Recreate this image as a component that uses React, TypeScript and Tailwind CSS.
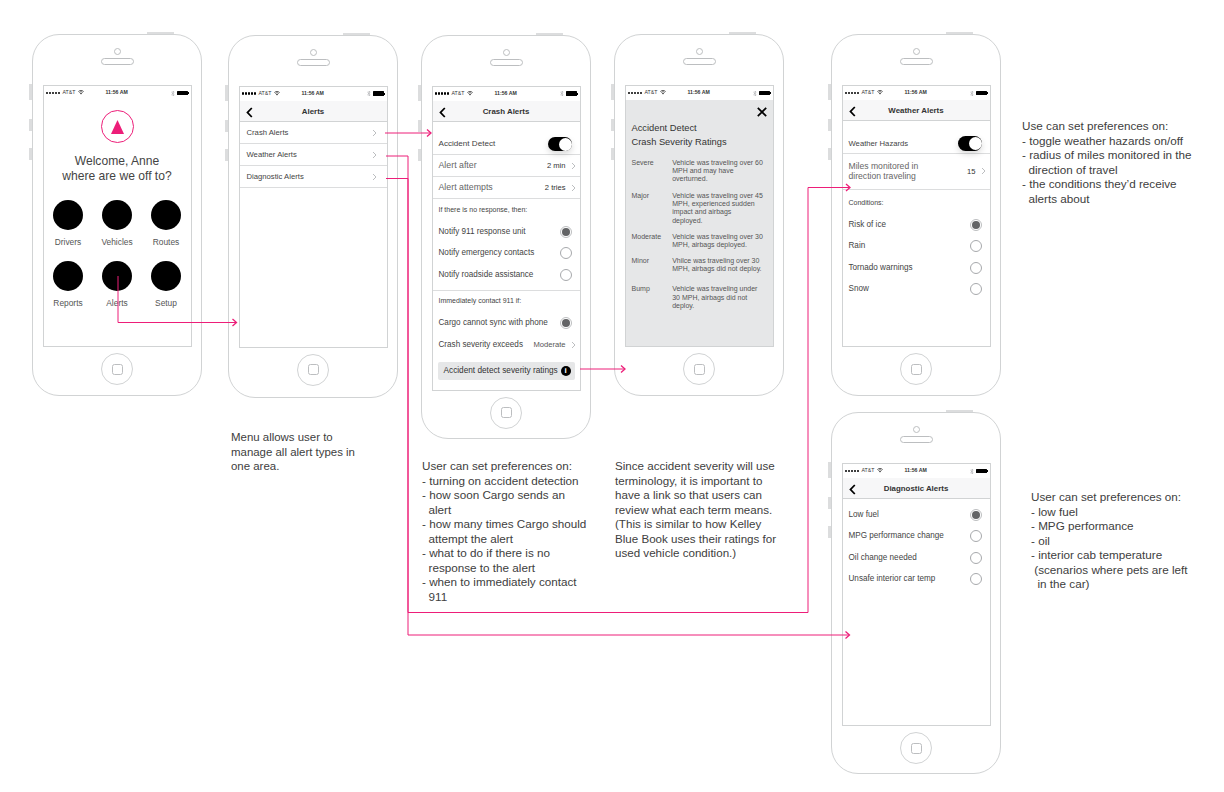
import React from "react";

const Chevron = () => (
  <svg width="5" height="8" viewBox="0 0 5 8" className="shrink-0">
    <path d="M1 1l3 3-3 3" fill="none" stroke="#bcbec0" strokeWidth="1" />
  </svg>
);

const Back = () => (
  <svg width="7" height="11" viewBox="0 0 7 11" className="shrink-0">
    <path d="M5.8 1L1.5 5.5l4.3 4.5" fill="none" stroke="#000" strokeWidth="1.8" />
  </svg>
);

const StatusBar = () => (
  <div className="flex h-[14px] shrink-0 items-center pl-[2px] pr-[2px] text-[5.2px] text-[#333]">
    <div className="flex w-[60px] items-center">
      <div className="flex gap-[0.5px]">
        {[0, 1, 2, 3, 4].map((i) => (
          <span key={i} className="h-[2.6px] w-[2.6px] rounded-full bg-black" />
        ))}
      </div>
      <span className="ml-[2px]">AT&amp;T</span>
      <svg width="6" height="5" viewBox="0 0 6 5" className="ml-[3px]">
        <path d="M0.3 1.6C1.9 0 4.1 0 5.7 1.6M1.2 2.5C2.3 1.5 3.7 1.5 4.8 2.5" fill="none" stroke="#222" strokeWidth="0.7" />
        <path d="M2 3.2C2.6 2.8 3.4 2.8 4 3.2L3 4.6Z" fill="#222" />
      </svg>
    </div>
    <span className="font-bold">11:56 AM</span>
    <svg width="4" height="7" viewBox="0 0 4 7" className="ml-auto">
      <path d="M0.3 2L3.2 4.8 2 6V1L3.2 2.2 0.3 5" fill="none" stroke="#a7a9ac" strokeWidth="0.6" />
    </svg>
    <div className="ml-[2.5px] flex items-center">
      <span className="h-[4.5px] w-[10.5px] rounded-[0.5px] bg-black" />
      <span className="h-[2px] w-[0.8px] bg-black" />
    </div>
  </div>
);

const Nav = ({ title }: { title: string }) => (
  <div className="relative flex h-[21px] shrink-0 items-center justify-center border-b border-[#d1d3d4] bg-[#f7f7f8] pt-[2px] text-[7.9px] font-bold text-[#333]">
    <span className="absolute left-[6px] top-[6px] flex">
      <Back />
    </span>
    <span>{title}</span>
  </div>
);

const Radio = ({ on }: { on?: boolean }) => (
  <span className={`flex h-[12px] w-[12px] shrink-0 items-center justify-center rounded-full border bg-white ${on ? "border-[#bcbec0]" : "border-[#a7a9ac]"}`}>
    {on ? <span className="h-[8px] w-[8px] rounded-full bg-[#636466]" /> : null}
  </span>
);

const Toggle = () => (
  <span className="flex h-[14.5px] w-[24px] shrink-0 items-center justify-end rounded-full bg-black shadow-[0_3px_6px_rgba(0,0,0,0.15)]">
    <span className="h-[13px] w-[13px] rounded-full bg-white" />
  </span>
);

const RadioRow = ({ label, on }: { label: string; on?: boolean }) => (
  <div className="flex h-[21.5px] items-center justify-between pl-[6px] pr-[8px] text-[8.15px] text-[#444]">
    <span>{label}</span>
    <Radio on={on} />
  </div>
);

const Phone = ({ className, screen, children }: { className: string; screen: string; children: React.ReactNode }) => (
  <div className={`absolute flex w-[170px] flex-col items-center rounded-[27px] border border-[#d1d3d4] bg-white ${className}`}>
    <span className="absolute left-[-4px] top-[49px] h-[16px] w-[3px] bg-[#dcddde]" />
    <span className="absolute left-[-4px] top-[84px] h-[12px] w-[3px] bg-[#dcddde]" />
    <span className="absolute left-[-4px] top-[113px] h-[12px] w-[3px] bg-[#dcddde]" />
    <span className="absolute left-[114px] top-[-3px] h-[2px] w-[27px] bg-[#dcddde]" />
    <span className="mt-[13px] h-[7px] w-[7px] rounded-full border border-[#bcbec0]" />
    <span className="mt-[3px] h-[7px] w-[33px] rounded-full border border-[#bcbec0]" />
    <div className={`mt-[20px] flex w-[149px] flex-col overflow-hidden border border-[#d1d3d4] ${screen}`}>
      <StatusBar />
      {children}
    </div>
    <span className="mt-[6px] flex h-[32px] w-[32px] items-center justify-center rounded-full border border-[#d1d3d4]">
      <span className="h-[11px] w-[11px] rounded-[2.5px] border border-[#bcbec0]" />
    </span>
  </div>
);

const Home = ({ label }: { label: string }) => (
  <div className="flex h-[61px] flex-col items-center">
    <span className="h-[30px] w-[30px] rounded-full bg-black" />
    <span className="mt-[6.5px] text-[8.4px] leading-[10px] text-[#555]">{label}</span>
  </div>
);

const MenuRow = ({ label }: { label: string }) => (
  <div className="flex h-[22px] items-center justify-between border-b border-[#dcddde] pl-[7px] pr-[10px] pt-[2px] text-[7.7px] text-[#444]">
    <span>{label}</span>
    <Chevron />
  </div>
);

const ValueRow = ({ label, value, className }: { label: string; value: string; className: string }) => (
  <div className={`flex items-center border-b border-[#dcddde] pl-[6px] pr-[4px] pt-[1px] text-[#666] ${className}`}>
    <span className="text-[8.8px]">{label}</span>
    <span className="ml-auto mr-[5px] text-[7.6px] text-[#333]">{value}</span>
    <Chevron />
  </div>
);

const Rating = ({ label, lines, className }: { label: string; lines: string[]; className: string }) => (
  <div className={`flex text-[7px] leading-[8.35px] text-[#555] ${className}`}>
    <span className="w-[40.7px] shrink-0">{label}</span>
    <div className="flex flex-col">
      {lines.map((l) => (
        <span key={l} className="whitespace-nowrap">{l}</span>
      ))}
    </div>
  </div>
);

const Note = ({ className, lines }: { className: string; lines: string[] }) => (
  <div className={`absolute whitespace-pre leading-[14.5px] text-[#404040] ${className}`}>
    {lines.map((l, i) => (
      <div key={i}>{l}</div>
    ))}
  </div>
);

const Head = ({ x, y }: { x: number; y: number }) => (
  <path d={`M${x - 4} ${y - 3.5}L${x} ${y}l${-4} 3.5`} fill="none" stroke="#ed1e79" strokeWidth="1.3" />
);

export default function App() {
  return (
    <div className="relative h-[792px] w-[1224px] overflow-hidden bg-white opacity-[0.999] [font-family:'Liberation_Sans',Arial,sans-serif]">
      <Phone className="left-[32px] top-[34px] h-[362px]" screen="h-[262px]">
        <div className="flex flex-col items-center">
          <div className="mt-[10px] flex h-[33px] w-[33px] items-center justify-center rounded-full border-[1.5px] border-[#ed1e79]">
            <svg width="13" height="14" viewBox="0 0 13 14">
              <path d="M6.5 0L13 14H0Z" fill="#ed1e79" />
            </svg>
          </div>
          <div className="mt-[11px] text-center text-[12.1px] leading-[15px] text-[#444]">
            <div>Welcome, Anne</div>
            <div>where are we off to?</div>
          </div>
          <div className="mt-[16px] grid w-[147px] grid-cols-3">
            {["Drivers", "Vehicles", "Routes", "Reports", "Alerts", "Setup"].map((l) => (
              <Home key={l} label={l} />
            ))}
          </div>
        </div>
      </Phone>

      <Phone className="left-[228px] top-[34.5px] h-[363px]" screen="h-[262px]">
        <Nav title="Alerts" />
        <MenuRow label="Crash Alerts" />
        <MenuRow label="Weather Alerts" />
        <MenuRow label="Diagnostic Alerts" />
      </Phone>

      <Phone className="left-[421px] top-[34.5px] h-[404px]" screen="h-[305px]">
        <Nav title="Crash Alerts" />
        <div className="flex h-[33px] items-center justify-between border-b border-[#dcddde] pl-[6px] pr-[8px] pt-[13px] text-[8.1px] text-[#444]">
          <span>Accident Detect</span>
          <Toggle />
        </div>
        <ValueRow label="Alert after" value="2 min" className="h-[22.5px]" />
        <ValueRow label="Alert attempts" value="2 tries" className="h-[22px]" />
        <div className="flex h-[22px] items-center pl-[6px] text-[7px] text-[#444]">If there is no response, then:</div>
        <RadioRow label="Notify 911 response unit" on />
        <RadioRow label="Notify emergency contacts" />
        <RadioRow label="Notify roadside assistance" />
        <div className="h-[5px] border-b border-[#dcddde]" />
        <div className="flex h-[22px] items-center pl-[6px] text-[7px] text-[#444]">Immediately contact 911 if:</div>
        <RadioRow label="Cargo cannot sync with phone" on />
        <div className="flex h-[21.5px] items-center pl-[6px] pr-[4px] text-[8.15px] text-[#444]">
          <span>Crash severity exceeds</span>
          <span className="ml-auto mr-[5px] text-[7.6px] text-[#555]">Moderate</span>
          <Chevron />
        </div>
        <div className="mx-[5px] mt-[6px] flex h-[18.5px] items-center justify-between rounded-[2px] bg-[#e6e7e8] pl-[6px] pr-[4px] text-[8.25px] text-[#333]">
          <span>Accident detect severity ratings</span>
          <span className="flex h-[10px] w-[10px] items-center justify-center rounded-full bg-black text-[8px] font-bold leading-none text-white">i</span>
        </div>
      </Phone>

      <Phone className="left-[614px] top-[34px] h-[362px]" screen="h-[262px]">
        <div className="flex-1 bg-[#e6e7e8] pl-[6px] pt-[6.5px]">
          <div className="flex justify-end pr-[6px]">
            <svg width="10" height="10" viewBox="0 0 10 10">
              <path d="M0.8 0.8L9.2 9.2M9.2 0.8L0.8 9.2" stroke="#000" strokeWidth="1.7" fill="none" />
            </svg>
          </div>
          <div className="mt-[4px] text-[9.3px] leading-[14px] text-[#333]">
            <div>Accident Detect</div>
            <div>Crash Severity Ratings</div>
          </div>
          <div className="mt-[10px] flex flex-col">
            <Rating label="Severe" className="" lines={["Vehicle was traveling over 60", "MPH and may have", "overturned."]} />
            <Rating label="Major" className="mt-[8px]" lines={["Vehicle was traveling over 45", "MPH, experienced sudden", "impact and airbags", "deployed."]} />
            <Rating label="Moderate" className="mt-[8px]" lines={["Vehicle was traveling over 30", "MPH, airbags deployed."]} />
            <Rating label="Minor" className="mt-[7.5px]" lines={["Vhilce was traveling over 30", "MPH, airbags did not deploy."]} />
            <Rating label="Bump" className="mt-[11.5px]" lines={["Vehicle was traveling under", "30 MPH, airbags did not", "deploy."]} />
          </div>
        </div>
      </Phone>

      <Phone className="left-[831px] top-[34px] h-[362px]" screen="h-[262px]">
        <Nav title="Weather Alerts" />
        <div className="flex h-[33px] items-center justify-between border-b border-[#dcddde] pl-[6px] pr-[8px] pt-[13px] text-[7.7px] text-[#444]">
          <span>Weather Hazards</span>
          <Toggle />
        </div>
        <div className="flex h-[35.5px] items-center border-b border-[#dcddde] pl-[6px] pr-[4px] text-[#666]">
          <div className="text-[8.6px] leading-[10.7px]">
            <div>Miles monitored in</div>
            <div>direction traveling</div>
          </div>
          <span className="ml-auto mr-[5px] text-[7.6px] text-[#333]">15</span>
          <Chevron />
        </div>
        <div className="flex h-[24.5px] items-center pl-[6px] pt-[3px] text-[7px] text-[#444]">Conditions:</div>
        <RadioRow label="Risk of ice" on />
        <RadioRow label="Rain" />
        <RadioRow label="Tornado warnings" />
        <RadioRow label="Snow" />
      </Phone>

      <Phone className="left-[831px] top-[412px] h-[362px]" screen="h-[263px]">
        <Nav title="Diagnostic Alerts" />
        <div className="pt-[5px]">
          <RadioRow label="Low fuel" on />
          <RadioRow label="MPG performance change" />
          <RadioRow label="Oil change needed" />
          <RadioRow label="Unsafe interior car temp" />
        </div>
      </Phone>

      <svg className="absolute left-0 top-0" width="1224" height="792" viewBox="0 0 1224 792">
        <g fill="none" stroke="#ed1e79" strokeWidth="1">
          <path d="M118 276V322.5H236" />
          <path d="M385 133H430" />
          <path d="M386 156H408V612.5H808V187.5H849" />
          <path d="M386 178.5H408V635H849" />
          <path d="M580 369H624" />
        </g>
        <Head x={236.5} y={322.5} />
        <Head x={431} y={133} />
        <Head x={850} y={187.5} />
        <Head x={849.5} y={635} />
        <Head x={625} y={369} />
      </svg>

      <Note className="left-[231px] top-[430px] text-[11.45px]" lines={["Menu allows user to", "manage all alert types in", "one area."]} />
      <Note className="left-[422px] top-[459px] text-[11.7px]" lines={["User can set preferences on:", "- turning on accident detection", "- how soon Cargo sends an", "  alert", "- how many times Cargo should", "  attempt the alert", "- what to do if there is no", "  response to the alert", "- when to immediately contact", "  911"]} />
      <Note className="left-[615px] top-[459px] text-[11.6px]" lines={["Since accident severity will use", "terminology, it is important to", "have a link so that users can", "review what each term means.", "(This is similar to how Kelley", "Blue Book uses their ratings for", "used vehicle condition.)"]} />
      <Note className="left-[1022px] top-[119px] text-[11.7px]" lines={["Use can set preferences on:", "- toggle weather hazards on/off", "- radius of miles monitored in the", "  direction of travel", "- the conditions they’d receive", "  alerts about"]} />
      <Note className="left-[1031px] top-[490px] text-[11.7px]" lines={["User can set preferences on:", "- low fuel", "- MPG performance", "- oil", "- interior cab temperature", " (scenarios where pets are left", "  in the car)"]} />
    </div>
  );
}
